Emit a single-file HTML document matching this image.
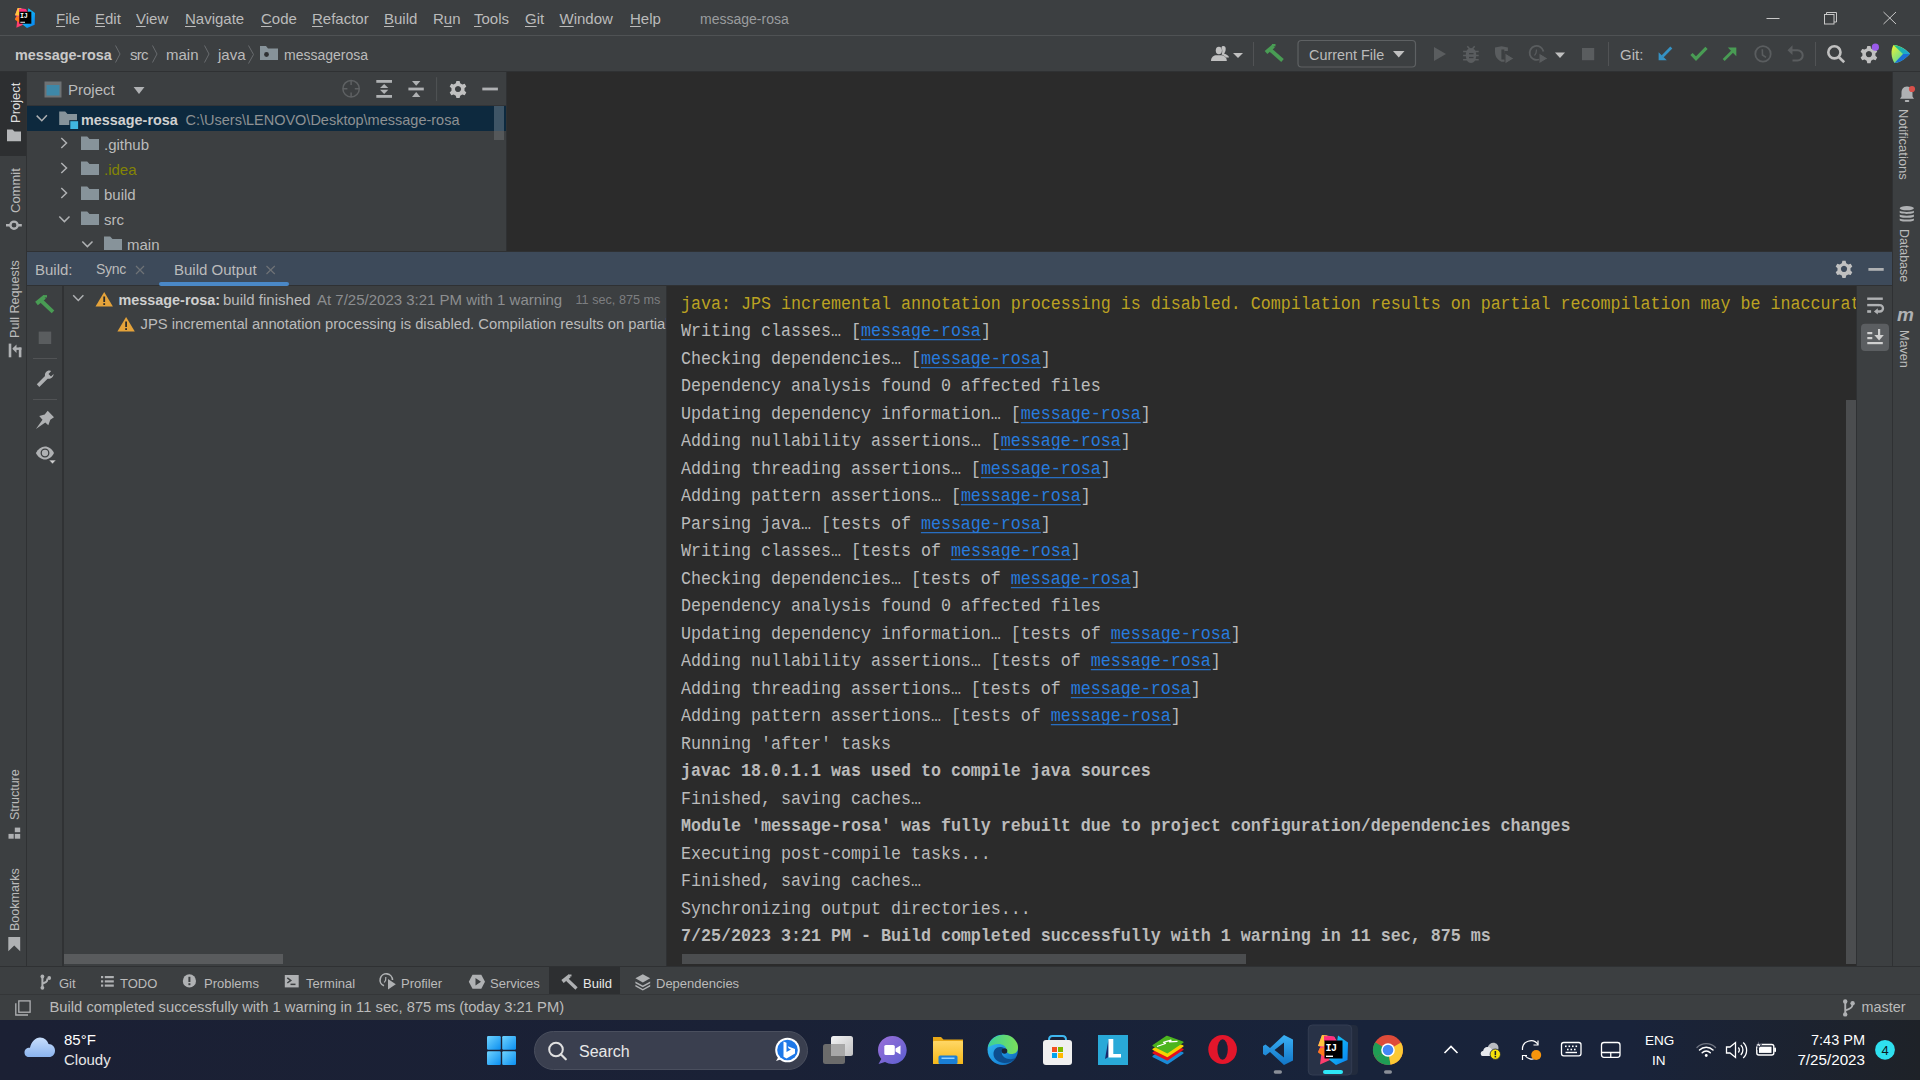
<!DOCTYPE html>
<html><head><meta charset="utf-8">
<style>
*{box-sizing:border-box;margin:0;padding:0}
html,body{width:1920px;height:1080px;overflow:hidden;background:#3c3f41;font-family:"Liberation Sans",sans-serif;color:#bbbbbb}
.a{position:absolute}
.t{position:absolute;white-space:pre;line-height:1;font-size:15px}
.s13{font-size:13px}
.m{position:absolute;white-space:pre;font-family:"Liberation Mono",monospace;font-size:16.6667px;line-height:1;color:#bbbbbb;left:681px;transform:scaleY(1.07);transform-origin:0 12.77px}
.b{font-weight:bold}
.lnk{color:#287bde;text-decoration:underline;text-underline-offset:3px}
.u{text-decoration:underline;text-underline-offset:2px}
svg{position:absolute;overflow:visible}
</style></head><body>

<!-- ===== TITLE BAR ===== -->
<div class="a" style="left:0;top:0;width:1920px;height:35px;background:#3c3f41"></div>
<div class="a" style="left:0;top:35px;width:1920px;height:1px;background:#4f5254"></div>
<div id="menus">
<div class="t" style="left:56px;top:11px"><span class="u">F</span>ile</div>
<div class="t" style="left:95px;top:11px"><span class="u">E</span>dit</div>
<div class="t" style="left:136px;top:11px"><span class="u">V</span>iew</div>
<div class="t" style="left:185px;top:11px"><span class="u">N</span>avigate</div>
<div class="t" style="left:261px;top:11px"><span class="u">C</span>ode</div>
<div class="t" style="left:312px;top:11px"><span class="u">R</span>efactor</div>
<div class="t" style="left:384px;top:11px"><span class="u">B</span>uild</div>
<div class="t" style="left:433px;top:11px">R<span class="u">u</span>n</div>
<div class="t" style="left:474px;top:11px"><span class="u">T</span>ools</div>
<div class="t" style="left:525px;top:11px"><span class="u">G</span>it</div>
<div class="t" style="left:559.5px;top:11px"><span class="u">W</span>indow</div>
<div class="t" style="left:630px;top:11px"><span class="u">H</span>elp</div>
<div class="t" style="left:700px;top:12px;font-size:14px;color:#9a9c9e">message-rosa</div>
</div>

<!-- ===== NAV BAR ===== -->
<div class="a" style="left:0;top:71px;width:1920px;height:1px;background:#2f3133"></div>
<div class="t b" style="left:15px;top:47.5px;font-size:14.4px;color:#c9c9c9">message-rosa</div>
<div class="t" style="left:130px;top:47px;letter-spacing:-0.8px">src</div>
<div class="t" style="left:166px;top:47px">main</div>
<div class="t" style="left:218px;top:47px">java</div>
<div class="t" style="left:284px;top:48px;font-size:14px">messagerosa</div>

<div class="t" style="left:1309px;top:47.5px;font-size:14.4px">Current File</div>
<div class="t" style="left:1620px;top:47px">Git:</div>
<!-- ===== LEFT STRIPE ===== -->
<div class="a" style="left:26px;top:72px;width:1px;height:894px;background:#2f3133"></div>
<div class="a" style="left:0;top:72px;width:26px;height:84px;background:#2d2f31"></div>

<!-- ===== PROJECT PANEL ===== -->
<div class="a" style="left:27px;top:105px;width:479px;height:1px;background:#323437"></div>
<div class="a" style="left:27px;top:106px;width:479px;height:25px;background:#0d293e"></div>
<div class="a" style="left:506px;top:72px;width:1px;height:179px;background:#2f3133"></div>
<div class="a" style="left:507px;top:72px;width:1385px;height:179px;background:#2b2b2b"></div>
<div class="t" style="left:68px;top:82px">Project</div>
<div class="t b" style="left:81px;top:112.5px;font-size:14.4px;color:#d0d0d0">message-rosa</div>
<div class="t" style="left:185.5px;top:112.5px;font-size:14.5px;color:#8e9193">C:\Users\LENOVO\Desktop\message-rosa</div>
<div class="t" style="left:104px;top:137px">.github</div>
<div class="t" style="left:104px;top:162px;color:#848504">.idea</div>
<div class="t" style="left:104px;top:187px">build</div>
<div class="t" style="left:104px;top:212px">src</div>
<div class="t" style="left:127px;top:237px">main</div>

<!-- ===== BUILD HEADER ===== -->
<div class="a" style="left:27px;top:251px;width:1865px;height:1px;background:#2f3133"></div>
<div class="a" style="left:27px;top:252px;width:1865px;height:33px;background:#3d4a5a"></div>
<div class="a" style="left:27px;top:285px;width:1865px;height:1px;background:#2f3133"></div>
<div class="a" style="left:159px;top:282px;width:130px;height:3.8px;border-radius:2px;background:#4a88c7"></div>
<div class="t" style="left:35px;top:262px">Build:</div>
<div class="t" style="left:96px;top:262px;font-size:14px;letter-spacing:-0.3px">Sync</div>
<div class="t" style="left:174px;top:262px">Build Output</div>

<!-- ===== BUILD TOOLBAR / TREE ===== -->
<div class="a" style="left:62px;top:286px;width:2px;height:680px;background:#303234"></div>
<div class="a" style="left:666px;top:286px;width:1px;height:680px;background:#2f3133"></div>
<div class="t b" style="left:118.5px;top:292.5px;font-size:14.4px;color:#cfcfcf">message-rosa:</div>
<div class="t" style="left:223px;top:292px">build finished</div>
<div class="t" style="left:317px;top:292px;color:#8c8e90">At 7/25/2023 3:21 PM with 1 warning</div>
<div class="t" style="left:575.5px;top:294.3px;font-size:12.67px;color:#7c7e80">11 sec, 875 ms</div>
<div class="a" style="left:63px;top:310px;width:603px;height:25px;overflow:hidden">
<div class="t" style="left:77.5px;top:7.3px;font-size:14.76px">JPS incremental annotation processing is disabled. Compilation results on partial recompilation may be inaccurate</div>
</div>
<div class="a" style="left:64px;top:954px;width:219px;height:10px;background:#595b5d"></div>

<!-- ===== CONSOLE ===== -->
<div class="a" style="left:667px;top:286px;width:1190px;height:680px;background:#2b2b2b;overflow:hidden" id="console"></div>

<div class="a" style="left:0;top:0;width:1856px;height:966px;overflow:hidden;clip-path:inset(286px 0 0 667px)">
<div class="m" style="top:296.73px;color:#bba222">java: JPS incremental annotation processing is disabled. Compilation results on partial recompilation may be inaccurate</div>
<div class="m" style="top:324.22px">Writing classes… [<span class="lnk">message-rosa</span>]</div>
<div class="m" style="top:351.71px">Checking dependencies… [<span class="lnk">message-rosa</span>]</div>
<div class="m" style="top:379.20px">Dependency analysis found 0 affected files</div>
<div class="m" style="top:406.69px">Updating dependency information… [<span class="lnk">message-rosa</span>]</div>
<div class="m" style="top:434.18px">Adding nullability assertions… [<span class="lnk">message-rosa</span>]</div>
<div class="m" style="top:461.67px">Adding threading assertions… [<span class="lnk">message-rosa</span>]</div>
<div class="m" style="top:489.16px">Adding pattern assertions… [<span class="lnk">message-rosa</span>]</div>
<div class="m" style="top:516.65px">Parsing java… [tests of <span class="lnk">message-rosa</span>]</div>
<div class="m" style="top:544.14px">Writing classes… [tests of <span class="lnk">message-rosa</span>]</div>
<div class="m" style="top:571.63px">Checking dependencies… [tests of <span class="lnk">message-rosa</span>]</div>
<div class="m" style="top:599.12px">Dependency analysis found 0 affected files</div>
<div class="m" style="top:626.61px">Updating dependency information… [tests of <span class="lnk">message-rosa</span>]</div>
<div class="m" style="top:654.10px">Adding nullability assertions… [tests of <span class="lnk">message-rosa</span>]</div>
<div class="m" style="top:681.59px">Adding threading assertions… [tests of <span class="lnk">message-rosa</span>]</div>
<div class="m" style="top:709.08px">Adding pattern assertions… [tests of <span class="lnk">message-rosa</span>]</div>
<div class="m" style="top:736.57px">Running &#39;after&#39; tasks</div>
<div class="m b" style="top:764.06px">javac 18.0.1.1 was used to compile java sources</div>
<div class="m" style="top:791.55px">Finished, saving caches…</div>
<div class="m b" style="top:819.04px">Module &#39;message-rosa&#39; was fully rebuilt due to project configuration/dependencies changes</div>
<div class="m" style="top:846.53px">Executing post-compile tasks...</div>
<div class="m" style="top:874.02px">Finished, saving caches…</div>
<div class="m" style="top:901.51px">Synchronizing output directories...</div>
<div class="m b" style="top:929.00px">7/25/2023 3:21 PM - Build completed successfully with 1 warning in 11 sec, 875 ms</div>
</div>
<!-- console toolbar -->
<div class="a" style="left:1856px;top:286px;width:1px;height:680px;background:#2f3133"></div>

<!-- right stripe -->
<div class="a" style="left:1892px;top:72px;width:1px;height:894px;background:#2f3133"></div>

<!-- bottom -->
<div class="a" style="left:0;top:966px;width:1920px;height:1px;background:#2f3133"></div>
<div class="a" style="left:549px;top:967px;width:71px;height:27px;background:#2d2f31"></div>
<div class="a" style="left:0;top:994px;width:1920px;height:1px;background:#343638"></div>
<div class="t s13" style="left:59px;top:977px">Git</div>
<div class="t s13" style="left:120px;top:977px">TODO</div>
<div class="t s13" style="left:204px;top:977px">Problems</div>
<div class="t s13" style="left:306px;top:977px">Terminal</div>
<div class="t s13" style="left:401px;top:977px">Profiler</div>
<div class="t s13" style="left:490px;top:977px">Services</div>
<div class="t s13" style="left:583px;top:977px;color:#e8e8e8">Build</div>
<div class="t s13" style="left:656px;top:977px">Dependencies</div>
<div class="t" style="left:49.5px;top:999.5px;font-size:14.75px">Build completed successfully with 1 warning in 11 sec, 875 ms (today 3:21 PM)</div>
<div class="t" style="left:1861.5px;top:999.5px;font-size:14.4px">master</div>

<!-- ===== TASKBAR ===== -->
<div class="a" style="left:0;top:1020px;width:1920px;height:60px;background:linear-gradient(90deg,#1b2034 0%,#1a2136 40%,#18233a 70%,#19233a 85%,#1e2228 100%)"></div>


<!-- ===== ICON OVERLAY ===== -->
<svg width="1920" height="1080" style="left:0;top:0" viewBox="0 0 1920 1080">
<!-- IJ logo -->
<use href="#ijicon" transform="translate(-863.7,-682.0) scale(0.6667)"/>
<!-- window controls -->
<g stroke="#c8c8c8" stroke-width="1" fill="none">
<line x1="1766.5" y1="18.5" x2="1779.5" y2="18.5"/>
<rect x="1824.5" y="14.5" width="9.5" height="9.5"/>
<path d="M1826.5,14.5 V12.5 H1836.5 V22 H1834"/>
<line x1="1883.5" y1="12" x2="1896" y2="24"/>
<line x1="1896" y1="12" x2="1883.5" y2="24"/>
</g>

<!-- breadcrumb chevrons -->
<g stroke="#686b6e" stroke-width="1" fill="none">
<path d="M115.5,45.5 L120,54 L115.5,62.5"/>
<path d="M152.5,45.5 L157,54 L152.5,62.5"/>
<path d="M204.5,45.5 L209,54 L204.5,62.5"/>
<path d="M248.5,45.5 L253.5,54.5 L248.5,63.5"/>
</g>
<!-- package folder -->
<path d="M260,46 H266 L268,48.5 H278 V60 H260 Z" fill="#87939a"/>
<circle cx="266.5" cy="54.5" r="2.4" fill="#2f3133"/>

<!-- toolbar right -->
<g fill="#c0c0c0">
<ellipse cx="1218.85" cy="50.5" rx="3.1" ry="3.8"/>
<path d="M1211,61 C1211,57 1214,55.3 1216.5,55.3 H1221 C1223.5,55.3 1226.8,57 1226.8,61 Z"/>
<path d="M1221.5,47.5 C1222,45.5 1225.5,45.5 1225.7,48.5 C1225.8,51 1225,52.5 1224,53.5 C1226.5,54.5 1229,55.5 1229,57.5 H1226 C1225,56 1223,55 1221.5,54.5 C1222.5,52.5 1222.6,50 1221.5,47.5 Z"/>
<polygon points="1233,53 1243,53 1238,58"/>
</g>
<line x1="1253.5" y1="42" x2="1253.5" y2="66" stroke="#515355" stroke-width="1"/>
<g stroke="#499c54" fill="none" stroke-linecap="butt">
<line x1="1266" y1="52.5" x2="1273.5" y2="46" stroke-width="4"/>
<line x1="1272" y1="45.2" x2="1275.5" y2="45.2" stroke-width="2.4"/>
<line x1="1270.5" y1="50" x2="1282.5" y2="60.5" stroke-width="3.8"/>
</g>
<rect x="1298" y="40.5" width="117.5" height="26.5" rx="3.5" fill="none" stroke="#5e6163" stroke-width="1.2"/>
<polygon points="1393,51 1404.5,51 1398.75,57.5" fill="#c0c0c0"/>
<g fill="#5a5d5f">
<polygon points="1434,47 1446,54 1434,61"/>
<path d="M1471,48 C1474.5,48 1476.2,51 1476.2,55 C1476.2,60 1474,63 1471,63 C1468,63 1465.8,60 1465.8,55 C1465.8,51 1467.5,48 1471,48 Z"/>
<path d="M1467.3,46.3 L1469.8,49 M1474.7,46.3 L1472.2,49 M1463.1,51.5 H1478.7 M1463.1,55.6 H1478.7 M1463.1,59.8 H1478.7" stroke="#5a5d5f" stroke-width="1.5"/>
<path d="M1495,47.5 L1501.5,46.3 L1507.9,47.5 V51 H1504.3 V59.5 H1505 V61.7 L1501.4,61.7 C1498,60 1495.3,57.5 1495,52.5 Z"/>
<polygon points="1505,53 1514,58.5 1505,64" stroke="#3c3f41" stroke-width="1"/>
<polygon points="1539,53 1548,58.4 1539,63.8" stroke="#3c3f41" stroke-width="1"/>
<polygon points="1555,52.5 1565,52.5 1560,58" fill="#c0c0c0"/>
<rect x="1582" y="48" width="12.2" height="12.2"/>
</g>
<rect x="1469" y="53" width="4.5" height="1.3" fill="#3c3f41"/><rect x="1469" y="56.9" width="4.5" height="1.3" fill="#3c3f41"/><rect x="1501.4" y="49.5" width="2.9" height="10" fill="#3c3f41"/>
<g stroke="#5a5d5f" stroke-width="1.8" fill="none">
<path d="M1539,59.5 A7,7 0 1 1 1543.5,51.5"/>
<path d="M1536.5,49.5 L1536,53 L1534.5,55.5" stroke-width="1.2"/>
</g>
<line x1="1608.5" y1="42" x2="1608.5" y2="66" stroke="#515355" stroke-width="1"/>
<!-- git icons -->
<line x1="1671.3" y1="47.6" x2="1662.5" y2="56.4" stroke="#3592c4" stroke-width="2.8"/>
<polygon points="1658.6,52.2 1658.6,60.2 1666.8,60.2" fill="#3592c4"/>
<polyline points="1691.5,54 1696,58.6 1706.5,47.8" fill="none" stroke="#499c54" stroke-width="3.2"/>
<line x1="1723.7" y1="60" x2="1732.5" y2="51.2" stroke="#499c54" stroke-width="2.8"/>
<polygon points="1727.8,47.6 1736.3,47.6 1736.3,56.2" fill="#499c54"/>
<g stroke="#5a5d5f" fill="none">
<circle cx="1763" cy="53.9" r="7.7" stroke-width="1.8"/>
<polyline points="1762.3,49.3 1762.5,55 1766,57.3" stroke-width="1.6"/>
<path d="M1791,50.2 H1797.5 A5.2,5.2 0 0 1 1797.5,60.6 H1792.5" stroke-width="2"/>
</g>
<polygon points="1787.5,50.2 1792.5,45.3 1792.5,55.1" fill="#5a5d5f"/>
<line x1="1815.5" y1="42" x2="1815.5" y2="66" stroke="#515355" stroke-width="1"/>
<g stroke="#c0c0c0" fill="none" stroke-width="2.6">
<circle cx="1834.4" cy="52.3" r="6.1"/>
<line x1="1838.5" y1="56.8" x2="1844.2" y2="62.3"/>
</g>
<!-- gear toolbar -->
<g id="gear">
<path fill="#c0c0c0" fill-rule="evenodd" d="M1867.3,46 h3.2 l0.6,2.4 l2.1,1.2 l2.4,-0.7 l1.6,2.8 l-1.8,1.7 v2.4 l1.8,1.7 l-1.6,2.8 l-2.4,-0.7 l-2.1,1.2 l-0.6,2.4 h-3.2 l-0.6,-2.4 l-2.1,-1.2 l-2.4,0.7 l-1.6,-2.8 l1.8,-1.7 v-2.4 l-1.8,-1.7 l1.6,-2.8 l2.4,0.7 l2.1,-1.2 z M1868.9,51 a3.1,3.1 0 1,0 0.01,0 z"/>
</g>
<circle cx="1875.4" cy="47.2" r="3.6" fill="#9a5bea"/>
<defs>
<linearGradient id="ai1" x1="0" y1="0" x2="1" y2="1"><stop offset="0" stop-color="#f6f22e"/><stop offset="0.55" stop-color="#7fe07f"/><stop offset="1" stop-color="#21c0e8"/></linearGradient>
<linearGradient id="ai2" x1="0" y1="0" x2="1" y2="0"><stop offset="0" stop-color="#20c878"/><stop offset="1" stop-color="#1a9ee8"/></linearGradient>
</defs>
<path d="M1893.5,45 C1896,44.5 1904,47 1910,53.8 C1904,60.5 1897,63.5 1894.5,63 C1891,58 1890.5,50 1893.5,45 Z" fill="url(#ai1)"/>
<path d="M1893.5,45 C1898,45.5 1905,48.5 1910,53.8 L1903,54 Z" fill="url(#ai2)"/>
<path d="M1903,54 L1910,53.8 C1905,59.5 1899,63 1894.5,63 Z" fill="#1b6fd6"/>
</svg>


<!-- ===== ICON OVERLAY 2 ===== -->
<svg width="1920" height="1080" style="left:0;top:0" viewBox="0 0 1920 1080">
<!-- project panel header -->
<rect x="44.5" y="81.5" width="17" height="16" fill="#6e7274" />
<rect x="46.5" y="85" width="13" height="10.5" fill="#3e88a8"/>
<polygon points="133.6,87 144.5,87 139,94" fill="#afb1b3"/>
<g stroke="#5e6163" fill="none" stroke-width="1.5">
<circle cx="351.1" cy="88.7" r="8.2"/>
<path d="M351.1,80.5 V85 M351.1,92.4 V96.9 M342.9,88.7 H347.4 M354.8,88.7 H359.3"/>
</g>
<g fill="#afb1b3">
<rect x="376.3" y="80" width="15.7" height="2.8"/>
<rect x="376.3" y="95" width="15.7" height="2.8"/>
<polygon points="380,88 388.3,88 384.15,84"/>
<polygon points="380,89.8 388.3,89.8 384.15,94"/>
<rect x="408.4" y="87.6" width="15.4" height="2.8"/>
<polygon points="412,80.9 420.4,80.9 416.2,85.7"/>
<polygon points="412,97 420.4,97 416.2,92"/>
</g>
<line x1="436.6" y1="77.2" x2="436.6" y2="101" stroke="#515355" stroke-width="1"/>
<use href="#gear" transform="translate(-1410.9,34.9)"/>
<rect x="482.3" y="87.6" width="15.6" height="2.8" fill="#afb1b3"/>
<!-- project tree scrollbar thumb -->
<rect x="494" y="106" width="10" height="34" fill="#3f5566" />
<rect x="494" y="131" width="10" height="9" fill="#55585a" />
<!-- tree chevrons -->
<g stroke="#afb1b3" stroke-width="1.5" fill="none">
<polyline points="36.7,115.6 41.8,120.7 46.9,115.3"/>
<polyline points="61.3,138 66.5,143 61.3,148"/>
<polyline points="61.3,163 66.5,168 61.3,173"/>
<polyline points="61.3,188 66.5,193 61.3,198"/>
<polyline points="59.3,216.5 64.4,221.6 69.5,216.5"/>
<polyline points="82.3,241.5 87.4,246.6 92.5,241.5"/>
</g>
<!-- module folder -->
<path d="M59.2,111.4 H65.2 L67.5,114 H77 V125 H59.2 Z" fill="#87939a"/>
<rect x="69.3" y="120.2" width="9.8" height="9.8" fill="#0d293e"/>
<rect x="70.3" y="121.2" width="7.8" height="7.8" fill="#40b6e0"/>
<!-- folders -->
<g fill="#87939a">
<path d="M81,136.4 H87.2 L89.5,139 H99 V150 H81 Z"/>
<path d="M81,161.4 H87.2 L89.5,164 H99 V175 H81 Z"/>
<path d="M81,186.4 H87.2 L89.5,189 H99 V200 H81 Z"/>
<path d="M81,211.4 H87.2 L89.5,214 H99 V225 H81 Z"/>
<path d="M104,236.4 H110.2 L112.5,239 H122 V250 H104 Z"/>
</g>
<!-- build header right -->
<use href="#gear" transform="translate(-24.9,214.8)"/>
<rect x="1868.4" y="268" width="15.3" height="2.8" fill="#afb1b3"/>
<g stroke="#6e7276" stroke-width="1.2">
<path d="M136,266 L144,274 M144,266 L136,274"/>
<path d="M266.5,266 L274.8,274 M274.8,266 L266.5,274"/>
</g>
<!-- build toolbar -->
<g stroke="#499c54" fill="none">
<line x1="36.5" y1="303.5" x2="44.5" y2="297" stroke-width="4.2"/>
<line x1="43" y1="296.3" x2="47" y2="296.3" stroke-width="2.4"/>
<line x1="41.5" y1="301" x2="53" y2="311.8" stroke-width="3.8"/>
</g>
<rect x="38.7" y="331.6" width="12.5" height="12.4" fill="#5a5d5f"/>
<line x1="33" y1="358.5" x2="57" y2="358.5" stroke="#515355"/>
<line x1="33" y1="399.5" x2="57" y2="399.5" stroke="#515355"/>
<path fill="#afb1b3" d="M49.5,370.5 C46.5,370.5 44.5,373 45,376 L36.8,384.3 L39.3,387 L47.6,378.7 C50.6,379.3 53.5,377.3 53.6,374 L51,376.5 L48.5,374 L51.2,371 C50.8,370.7 50.2,370.5 49.5,370.5 Z"/>
<polygon fill="#afb1b3" points="47.7,410.7 54,417.3 50.3,419.8 48.3,425.2 45.3,422.4 35.9,429.1 42.5,419.7 39.2,416.1 44.7,414.5"/>
<g>
<path fill="#afb1b3" d="M35.9,453 C38,448.8 41.5,446.6 45,446.6 C48.5,446.6 52,448.8 54,453 C52,457.3 48.5,459.5 45,459.5 C41.5,459.5 38,457.3 35.9,453 Z"/>
<circle cx="45" cy="453" r="3.8" fill="none" stroke="#3c3f41" stroke-width="1.3"/>
<polygon points="48.9,460.1 56.1,460.1 52.5,464" fill="#d0d0d0" stroke="#3c3f41" stroke-width="0.6"/>
</g>
<!-- build tree -->
<polyline points="73.2,295.3 78.3,300.5 83.4,295.3" stroke="#afb1b3" stroke-width="1.5" fill="none"/>
<polygon points="104.2,292 112.9,306.6 95.5,306.6" fill="#e5a33a"/>
<rect x="103.3" y="296.5" width="1.8" height="5.5" fill="#2b2b2b"/>
<rect x="103.3" y="303.2" width="1.8" height="1.8" fill="#2b2b2b"/>
<polygon points="126.1,317 134.8,331.5 117.4,331.5" fill="#e5a33a"/>
<rect x="125.2" y="321.5" width="1.8" height="5.5" fill="#2b2b2b"/>
<rect x="125.2" y="328.2" width="1.8" height="1.8" fill="#2b2b2b"/>
<!-- console toolbar -->
<g fill="#afb1b3">
<rect x="1867.2" y="297.5" width="15.6" height="2.4"/>
<rect x="1867.2" y="303.9" width="12" height="2.4"/>
<rect x="1867.2" y="310.2" width="3.9" height="2.6"/>
<path d="M1878.5,305.1 H1879.8 A3.2,3.2 0 0 1 1879.8,311.5 H1876.5" fill="none" stroke="#afb1b3" stroke-width="2.3"/>
<polygon points="1873.9,311.4 1877.8,308.2 1877.8,314.6"/>
</g>
<rect x="1861" y="323.7" width="28" height="27.3" rx="4" fill="#5b5e61"/>
<g fill="#d0d0d0">
<rect x="1867.3" y="332" width="5" height="2.2"/>
<rect x="1867.3" y="337" width="5" height="2.2"/>
<rect x="1867.3" y="342" width="15.5" height="2.2"/>
<rect x="1878" y="329" width="2.2" height="8"/>
<polygon points="1874.3,335 1883.8,335 1879.1,340.5"/>
</g>
<!-- scrollbars -->
<rect x="1846" y="400" width="10" height="564" fill="#4b4d4f"/>
<rect x="682" y="954" width="564" height="10" fill="#4b4d4f"/>
</svg>


<!-- ===== STRIPE TEXTS ===== -->
<div class="t s13" style="left:9.4px;top:123px;transform-origin:0 0;transform:rotate(-90deg);color:#dedede">Project</div>
<div class="t s13" style="left:9.4px;top:212.5px;transform-origin:0 0;transform:rotate(-90deg)">Commit</div>
<div class="t" style="left:9.4px;top:337.5px;transform-origin:0 0;transform:rotate(-90deg);font-size:12.6px">Pull Requests</div>
<div class="t" style="left:9.4px;top:819.5px;transform-origin:0 0;transform:rotate(-90deg);font-size:12.5px">Structure</div>
<div class="t" style="left:9.4px;top:930.8px;transform-origin:0 0;transform:rotate(-90deg);font-size:12.56px">Bookmarks</div>
<div class="t s13" style="left:1910.2px;top:108.5px;transform-origin:0 0;transform:rotate(90deg)">Notifications</div>
<div class="t" style="left:1910.2px;top:228.8px;transform-origin:0 0;transform:rotate(90deg);font-size:12.4px">Database</div>
<div class="t" style="left:1910.2px;top:329.6px;transform-origin:0 0;transform:rotate(90deg);font-size:12.6px">Maven</div>
<svg width="1920" height="1080" style="left:0;top:0" viewBox="0 0 1920 1080">
<!-- left stripe icons -->
<path d="M7,129.5 H12.5 L14.5,131.5 H21 V141.2 H7 Z" fill="#b5b7b9"/>
<g fill="none" stroke="#afb1b3">
<circle cx="14" cy="225.2" r="3.6" stroke-width="2.4"/>
<path d="M6,225.2 H10.4 M17.6,225.2 H21.8" stroke-width="2.4"/>
</g>
<g fill="#afb1b3">
<rect x="8.7" y="343.6" width="2.6" height="13.7"/>
<rect x="18.8" y="347.5" width="2.6" height="9.8"/>
<rect x="13.5" y="347.5" width="7.9" height="2.4"/>
<polygon points="12.3,348.7 16.5,344.5 16.5,352.9"/>
<rect x="14.8" y="827.6" width="5.4" height="4.6"/>
<rect x="8.5" y="833.9" width="5.2" height="4.8"/>
<rect x="14.8" y="833.9" width="5.4" height="4.8"/>
<polygon points="8.3,936.9 20.2,936.9 20.2,951.2 14.25,945.6 8.3,951.2"/>
</g>
<!-- right stripe icons -->
<g fill="#afb1b3">
<path d="M1907,86.5 C1903,86.5 1901.5,89.5 1901.5,93 V96.5 L1900,98.8 H1914 L1912.5,96.5 V93 C1912.5,89.5 1911,86.5 1907,86.5 Z"/>
<rect x="1904.8" y="100" width="4.5" height="1.9" rx="0.9"/>
<ellipse cx="1906.8" cy="208.2" rx="7.1" ry="2.1"/>
<path d="M1899.7,210.8 C1901,212.3 1912.6,212.3 1913.9,210.8 V212.6 C1913.9,214.4 1899.7,214.4 1899.7,212.6 Z"/>
<path d="M1899.7,214.6 C1901,216.1 1912.6,216.1 1913.9,214.6 V216.4 C1913.9,218.2 1899.7,218.2 1899.7,216.4 Z"/>
<path d="M1899.7,218.4 C1901,219.9 1912.6,219.9 1913.9,218.4 V220.2 C1913.9,222 1899.7,222 1899.7,220.2 Z"/>
</g>
<circle cx="1912" cy="89" r="3.1" fill="#d9504a"/>
<text x="1897" y="321" font-family="Liberation Sans" font-weight="bold" font-style="italic" font-size="19" fill="#afb1b3">m</text>
</svg>


<!-- ===== BOTTOM ICONS ===== -->
<svg width="1920" height="1080" style="left:0;top:0" viewBox="0 0 1920 1080">
<g fill="#afb1b3">
<!-- git branch -->
<rect x="41.4" y="976" width="2" height="12"/>
<circle cx="42.4" cy="976.5" r="1.9"/>
<circle cx="42.4" cy="987.8" r="1.9"/>
<circle cx="49.2" cy="978" r="1.9"/>
<path d="M48.2,978.5 V980 C48.2,982 46,983.5 42.4,984.5 V982.5 C45,981.5 46.3,981 46.3,979.5 V978.5 Z"/>
<!-- todo -->
<rect x="101" y="976" width="2.2" height="2.2"/><rect x="104.8" y="976" width="9" height="2.2"/>
<rect x="101" y="980.3" width="2.2" height="2.2"/><rect x="104.8" y="980.3" width="9" height="2.2"/>
<rect x="101" y="984.5" width="2.2" height="2.2"/><rect x="104.8" y="984.5" width="9" height="2.2"/>
<!-- problems -->
<circle cx="189.4" cy="980.9" r="6.6"/>
<!-- terminal -->
<rect x="284.8" y="975" width="13.9" height="12.4"/>
<!-- services hexagon -->
<polygon points="472.5,974.7 481.3,974.7 485,981.75 481.3,988.8 472.5,988.8 468.8,981.75"/>
<!-- layers -->
<polygon points="642.8,974.2 650.2,978.3 642.8,982.4 635.4,978.3"/>
<path d="M635.4,981.5 L642.8,985.6 L650.2,981.5 V983.2 L642.8,987.3 L635.4,983.2 Z"/>
<path d="M635.4,984.8 L642.8,988.9 L650.2,984.8 V986.5 L642.8,990.6 L635.4,986.5 Z"/>
</g>
<g fill="#3c3f41">
<rect x="188.4" y="976.8" width="2" height="5.2"/>
<rect x="188.4" y="983.2" width="2" height="2"/>

<polygon points="475.5,978 475.5,985.5 481,981.75"/>
</g>
<g stroke="#afb1b3" fill="none">

<path d="M384,985.8 A6.2,6.2 0 1 1 392.5,980" stroke-width="1.6"/>
<path d="M385.8,977 L385.6,980.4 L384.2,982.5" stroke-width="1.2"/>
</g>
<path d="M287.3,977.8 L290.8,980.4 L287.3,983" stroke="#3c3f41" stroke-width="1.5" fill="none"/>
<rect x="290.5" y="983.6" width="5" height="1.5" fill="#3c3f41"/>
<polygon points="388,979 395.8,984.25 388,989.5" fill="#afb1b3"/>
<!-- hammer grey -->
<g stroke="#afb1b3" fill="none">
<line x1="562.5" y1="981.5" x2="569.5" y2="975.8" stroke-width="3.6"/>
<line x1="568" y1="975.5" x2="571.5" y2="975.5" stroke-width="2"/>
<line x1="567" y1="979.5" x2="576.5" y2="988.5" stroke-width="3.2"/>
</g>
<!-- status bar icon -->
<g fill="none" stroke="#afb1b3" stroke-width="1.3">
<rect x="18.8" y="1000.9" width="11.3" height="11.3"/>
<path d="M15.8,1003.2 V1015 H28"/>
</g>
<!-- master -->
<g fill="#afb1b3">
<rect x="1844.3" y="1001.5" width="1.9" height="13"/>
<circle cx="1845.2" cy="1001.5" r="2.2"/>
<circle cx="1845.2" cy="1014.4" r="2.2"/>
<circle cx="1852.6" cy="1003.2" r="2.2"/>
</g>
<path d="M1852.3,1004 V1005.5 C1852.3,1008 1849,1009.2 1845.5,1010.3" stroke="#afb1b3" stroke-width="1.8" fill="none"/>
</svg>


<!-- ===== TASKBAR CONTENT ===== -->
<div class="t" style="left:64px;top:1032px;font-size:15px;color:#ffffff">85°F</div>
<div class="t" style="left:64px;top:1052px;font-size:15px;color:#e6e6e6">Cloudy</div>
<div class="a" style="left:533.5px;top:1030.5px;width:274px;height:39px;border-radius:20px;background:#3a3f4f;border:1px solid #4a4f5e"></div>
<div class="t" style="left:579px;top:1043.5px;font-size:16px;color:#e8e8e8">Search</div>
<div class="t" style="left:1645px;top:1034px;font-size:13.5px;color:#ffffff">ENG</div>
<div class="t" style="left:1652px;top:1054px;font-size:13.5px;color:#ffffff">IN</div>
<div class="t" style="left:1765px;top:1032.5px;font-size:14.5px;color:#ffffff;width:100px;text-align:right">7:43 PM</div>
<div class="t" style="left:1765px;top:1052.3px;font-size:15.2px;color:#ffffff;width:100px;text-align:right">7/25/2023</div>
<svg width="1920" height="1080" style="left:0;top:0" viewBox="0 0 1920 1080">
<defs>
<linearGradient id="cloudg" x1="0" y1="0" x2="0" y2="1"><stop offset="0" stop-color="#c8defc"/><stop offset="1" stop-color="#8bb4ef"/></linearGradient>
<linearGradient id="wing" x1="0" y1="0" x2="1" y2="1"><stop offset="0" stop-color="#6fd3ff"/><stop offset="1" stop-color="#0a8ef0"/></linearGradient>
<linearGradient id="tv" x1="0" y1="0" x2="1" y2="1"><stop offset="0" stop-color="#ffffff"/><stop offset="1" stop-color="#c9c9c9"/></linearGradient>
<linearGradient id="teams" x1="0" y1="0" x2="1" y2="1"><stop offset="0" stop-color="#9b6fd9"/><stop offset="1" stop-color="#5b5fd0"/></linearGradient>
<linearGradient id="fold" x1="0" y1="0" x2="0" y2="1"><stop offset="0" stop-color="#ffd766"/><stop offset="1" stop-color="#f5b819"/></linearGradient>
<linearGradient id="edge1" x1="0" y1="0" x2="1" y2="1"><stop offset="0" stop-color="#37c0f0"/><stop offset="0.6" stop-color="#1b8fe0"/><stop offset="1" stop-color="#0c59a4"/></linearGradient>
<linearGradient id="edge2" x1="0" y1="0" x2="1" y2="0"><stop offset="0" stop-color="#3bcf9a"/><stop offset="1" stop-color="#7be05a"/></linearGradient>
<linearGradient id="chromered" x1="0" y1="0" x2="1" y2="0"><stop offset="0" stop-color="#db4437"/><stop offset="1" stop-color="#e0533f"/></linearGradient>
<linearGradient id="vsc" x1="0" y1="0" x2="0" y2="1"><stop offset="0" stop-color="#3ab0f5"/><stop offset="1" stop-color="#1175c7"/></linearGradient>
</defs>
<!-- weather cloud -->
<path d="M29,1057 C25.5,1057 24.5,1054.5 24.5,1052.5 C24.5,1049.5 27,1047.5 30,1047.8 C31,1042 35.5,1037.5 40,1037.5 C44.5,1037.5 47.5,1040.5 48.5,1044 C52.5,1044 55,1047 55,1050.5 C55,1054.5 52.5,1057 49,1057 Z" fill="url(#cloudg)"/>
<!-- windows logo -->
<rect x="487" y="1036" width="13.8" height="13.8" rx="1.2" fill="url(#wing)"/>
<rect x="502.2" y="1036" width="13.8" height="13.8" rx="1.2" fill="url(#wing)"/>
<rect x="487" y="1051.2" width="13.8" height="13.8" rx="1.2" fill="url(#wing)"/>
<rect x="502.2" y="1051.2" width="13.8" height="13.8" rx="1.2" fill="url(#wing)"/>
<!-- search magnifier -->
<circle cx="556" cy="1049.5" r="6.8" fill="none" stroke="#e0e0e0" stroke-width="2"/>
<line x1="560.8" y1="1054.3" x2="565.8" y2="1059.3" stroke="#e0e0e0" stroke-width="2.2" stroke-linecap="round"/>
<!-- bing -->
<circle cx="787.5" cy="1050" r="12.3" fill="#ffffff"/>
<path d="M776,1061 L779,1056 L782,1059 Z" fill="#ffffff"/>
<circle cx="787.5" cy="1050" r="10.3" fill="#1e78e8"/>
<path d="M783.5,1041.5 L786.5,1042.7 V1052 L791,1049.5 L788.5,1048.3 L787.8,1046.2 L795,1049 V1053.5 L786.5,1058.5 L783.5,1056.8 Z" fill="#ffffff"/>
<!-- task view -->
<rect x="823" y="1044" width="22" height="20" rx="2.5" fill="#6b6b6b"/>
<rect x="831" y="1036" width="22" height="20" rx="2.5" fill="url(#tv)" opacity="0.95"/>
<rect x="831" y="1044" width="14" height="12" fill="#a8a8a8"/>
<!-- teams chat -->
<path d="M892.5,1036 C884.5,1036 878,1042.3 878,1050 C878,1053.5 879.3,1056.6 881.3,1059 L878.5,1064 L885,1062 C887.3,1063.3 889.8,1064 892.5,1064 C900.5,1064 906.7,1057.7 906.7,1050 C906.7,1042.3 900.5,1036 892.5,1036 Z" fill="url(#teams)"/>
<rect x="884.3" y="1045" width="10.5" height="10" rx="1.6" fill="#ffffff"/>
<polygon points="895.5,1048.5 900.5,1045.5 900.5,1054.5 895.5,1051.5" fill="#ffffff"/>
<!-- explorer -->
<path d="M933,1037 H941 L943.5,1039.5 H963 V1064 H933 Z" fill="#e8a817"/>
<rect x="933" y="1041" width="30" height="23" rx="1" fill="url(#fold)"/>
<rect x="938.5" y="1055.5" width="19" height="8.5" rx="1.5" fill="#1a7fd6"/>
<rect x="941.5" y="1057.5" width="13" height="1.5" fill="#8fd0ff"/>
<!-- edge -->
<circle cx="1002.75" cy="1049.85" r="15.2" fill="url(#edge1)"/>
<path d="M988,1047 C990,1038 998,1034.7 1004,1034.7 C1012,1034.7 1018,1041 1018,1047.5 C1018,1052 1015,1054 1011.5,1054 C1008,1054 1006.5,1052 1006.5,1050.5 C1006.5,1046 1002,1043.5 997.5,1044 C993,1044.5 989.5,1046.5 988,1047 Z" fill="url(#edge2)"/>
<path d="M1000,1047 C996,1047 993.5,1050 993.5,1054 C993.5,1059.5 999,1063 1004.5,1063 C1009,1063 1013.5,1061 1016,1058 C1012,1060 1006,1059.5 1003,1056 C1001,1053.5 1001.5,1049.5 1004,1048 C1003,1047.3 1001.5,1047 1000,1047 Z" fill="#0d4e8f"/>
<circle cx="1004.5" cy="1051" r="2.8" fill="#1a2237"/>
<!-- store -->
<path d="M1049,1040 C1049,1037 1050,1036 1052.5,1036 H1062.5 C1065,1036 1066,1037 1066,1040" fill="none" stroke="#3fb8f0" stroke-width="2"/>
<rect x="1043" y="1040" width="29" height="25" rx="3" fill="#f0f0f0"/>
<rect x="1052" y="1047" width="5" height="5" fill="#f25022"/>
<rect x="1058" y="1047" width="5" height="5" fill="#7fba00"/>
<rect x="1052" y="1053" width="5" height="5" fill="#00a4ef"/>
<rect x="1058" y="1053" width="5" height="5" fill="#ffb900"/>
<!-- L app -->
<rect x="1098" y="1035" width="30" height="30" fill="#29a9d8"/>
<polygon points="1105,1059 1108.5,1039.5 1108.5,1057" fill="#1a2a6c"/>
<polygon points="1108.5,1039 1113.3,1039 1113.3,1054 1121,1054 1121,1057.5 1108.5,1057.5" fill="#ffffff"/>
<!-- bluestacks -->
<polygon points="1153.2,1056.5 1166.9,1047.4 1182.8,1053.1 1167.3,1063.5" fill="#1a8ad6" stroke="#1a8ad6" stroke-width="1.6" stroke-linejoin="round"/>
<polygon points="1153.2,1052.8 1166.9,1043.7 1182.8,1049.4 1167.3,1059.8" fill="#e5101c" stroke="#e5101c" stroke-width="1.6" stroke-linejoin="round"/>
<polygon points="1153.2,1049.4 1166.9,1040.3 1182.8,1046.0 1167.3,1056.4" fill="#f6d200" stroke="#f6d200" stroke-width="1.6" stroke-linejoin="round"/>
<polygon points="1153.2,1045.6 1166.9,1036.5 1182.8,1042.2 1167.3,1052.6" fill="#4cb51f" stroke="#4cb51f" stroke-width="1.6" stroke-linejoin="round"/>
<path d="M1157,1046.5 L1165.5,1043.5 L1163.5,1042.3 L1171,1040.2 L1169.5,1041.8 L1177.5,1041.3" stroke="#ffffff" stroke-width="1.3" fill="none" stroke-linejoin="round"/>
<!-- opera -->
<ellipse cx="1222.6" cy="1049.5" rx="14.3" ry="14.5" fill="#e3162b"/>
<ellipse cx="1222.6" cy="1049.5" rx="5.2" ry="10.3" fill="#1a2339"/>
<!-- vscode -->
<path d="M1284,1035 L1293,1039.5 V1060.5 L1284,1065 L1270,1052 L1265.5,1055.5 L1263,1054 V1046 L1265.5,1044.5 L1270,1048 Z M1284,1042.5 L1274.5,1050 L1284,1057.5 Z" fill="url(#vsc)"/>
<rect x="1273.7" y="1070.3" width="8.3" height="3.4" rx="1.7" fill="#8a8f98"/>
<!-- IJ highlight -->
<rect x="1311" y="1025" width="47" height="50" rx="4" fill="#222b3d"/>
<rect x="1308.3" y="1025" width="43.4" height="50" rx="4" fill="#283247" stroke="#333d52" stroke-width="1"/>
<defs><linearGradient id="ijl" x1="0" y1="0" x2="0" y2="1"><stop offset="0" stop-color="#ff3c8a"/><stop offset="1" stop-color="#ff3d6a"/></linearGradient>
<linearGradient id="ijr" x1="0" y1="0" x2="1" y2="1"><stop offset="0" stop-color="#16d6f8"/><stop offset="1" stop-color="#0a7ff0"/></linearGradient></defs>
<g id="ijicon"><polygon points="1322,1035 1334,1036.5 1337,1041 1330,1060 1320,1064.5 1321.5,1053 1318,1052 1320.5,1046.5 1318,1046" fill="url(#ijl)"/>
<polygon points="1322,1035 1327.5,1035.5 1324,1046.5 1318,1046" fill="#ffc53d"/>
<polygon points="1319.5,1048.5 1324.5,1047 1324.5,1057 1318,1052.5" fill="#ff7a1c"/>
<polygon points="1324,1036 1335,1037 1333,1041 1324,1041" fill="#ff2f7c"/>
<polygon points="1338,1035.5 1348,1042.5 1347.5,1060 1336,1065 1329,1059.5 1336,1049" fill="url(#ijr)"/>
<rect x="1324.5" y="1040.5" width="18" height="18" fill="#000000"/>
<text x="1325.6" y="1050.6" font-family="Liberation Mono" font-weight="bold" font-size="10" fill="#ffffff" letter-spacing="-0.6">IJ</text>
<rect x="1326" y="1055.6" width="7" height="1.4" fill="#ffffff"/></g>
<rect x="1323" y="1070" width="20" height="4" rx="2" fill="#2ee6f6"/>
<!-- chrome -->
<circle cx="1388" cy="1050" r="15" fill="#de4b39"/>
<path d="M1388,1050 L1375,1057.5 A15,15 0 0 0 1390.5,1064.8 Z" fill="#1f9d55"/>
<path d="M1388,1050 L1375,1057.5 A15,15 0 0 1 1375.2,1042.3 Z" fill="#1f9d55"/>
<path d="M1388,1050 L1401,1042.5 A15,15 0 0 1 1390.5,1064.8 Z" fill="#fcc934"/>
<circle cx="1388" cy="1050" r="6.8" fill="#ffffff"/>
<circle cx="1388" cy="1050" r="5.3" fill="#4487f5"/>
<rect x="1384" y="1070.3" width="8" height="3.4" rx="1.7" fill="#8a8f98"/>
<!-- tray -->
<polyline points="1444.5,1053 1451,1046.5 1457.5,1053" fill="none" stroke="#ffffff" stroke-width="1.6"/>
<path d="M1483,1056 C1481.5,1056 1480.8,1054.8 1480.8,1053.5 C1480.8,1052 1482,1051 1483.3,1051 C1483.7,1048.5 1485.5,1047 1487.8,1047 C1488.8,1044.5 1490.8,1042.8 1493.3,1042.8 C1496.3,1042.8 1498.5,1045 1498.5,1048 L1497,1056 Z" fill="#b9bcc2"/>
<path d="M1483,1056 C1481.5,1056 1480.8,1054.8 1480.8,1053.5 C1480.8,1052 1482,1051 1483.3,1051 C1483.7,1048.5 1485.5,1047 1487.8,1047 C1490,1047 1491.5,1048.5 1492,1050 L1490,1056 Z" fill="#e6e8ec"/>
<circle cx="1495.3" cy="1054.2" r="5.2" fill="#f5e10c" stroke="#1a2136" stroke-width="0.8"/>
<rect x="1494.6" y="1051" width="1.5" height="4.2" fill="#222"/>
<rect x="1494.6" y="1056" width="1.5" height="1.4" fill="#222"/>
<g fill="none" stroke="#ffffff" stroke-width="1.2">
<path d="M1522.5,1050 A8.5,8.5 0 0 1 1538,1044.5"/>
<path d="M1538,1040.5 V1045 H1533.5"/>
<path d="M1536,1058 A8.5,8.5 0 0 1 1525,1055.5"/>
<path d="M1522.5,1060 V1055.5 H1527"/>
</g>
<circle cx="1536.2" cy="1055" r="5" fill="#f7950c"/>
<g fill="none" stroke="#ffffff" stroke-width="1.3">
<rect x="1561.5" y="1042.5" width="19.5" height="13.3" rx="2.2"/>
<rect x="1601.5" y="1042.5" width="18.5" height="14.8" rx="2.5"/>
<path d="M1601.5,1052.5 H1620 M1610.75,1052.5 V1057.3"/>
</g>
<g fill="#ffffff">
<rect x="1565" y="1045.5" width="1.6" height="1.6"/><rect x="1568.5" y="1045.5" width="1.6" height="1.6"/><rect x="1572" y="1045.5" width="1.6" height="1.6"/><rect x="1575.5" y="1045.5" width="1.6" height="1.6"/>
<rect x="1567" y="1048.7" width="1.6" height="1.6"/><rect x="1570.5" y="1048.7" width="1.6" height="1.6"/><rect x="1574" y="1048.7" width="1.6" height="1.6"/>
<rect x="1565.5" y="1051.8" width="11.5" height="1.4"/>
</g>
<!-- wifi -->
<g fill="none" stroke-linecap="round">
<path d="M1697,1047.5 A13,13 0 0 1 1715.5,1047.5" stroke="#6f7480" stroke-width="1.4"/>
<path d="M1699.5,1050 A9.5,9.5 0 0 1 1713,1050" stroke="#ffffff" stroke-width="1.5"/>
<path d="M1702.2,1052.7 A5.6,5.6 0 0 1 1710.3,1052.7" stroke="#ffffff" stroke-width="1.5"/>
</g>
<circle cx="1706.25" cy="1055.5" r="1.4" fill="#ffffff"/>
<!-- volume -->
<path d="M1726.5,1047 H1730 L1735.5,1042.5 V1057.5 L1730,1053 H1726.5 Z" fill="none" stroke="#ffffff" stroke-width="1.3"/>
<g fill="none" stroke="#ffffff" stroke-width="1.3">
<path d="M1738.3,1047.5 A3.5,3.5 0 0 1 1738.3,1052.5"/>
<path d="M1740.8,1045 A7,7 0 0 1 1740.8,1055"/>
<path d="M1743.2,1042.5 A10.5,10.5 0 0 1 1743.2,1058"/>
</g>
<!-- battery -->
<rect x="1756.8" y="1044.5" width="17" height="10.5" rx="2" fill="none" stroke="#ffffff" stroke-width="1.4"/>
<rect x="1774.2" y="1047.5" width="1.8" height="4.5" rx="0.8" fill="#ffffff"/>
<rect x="1759" y="1046.7" width="12.5" height="6.2" fill="#ffffff"/>
<path d="M1759,1041 L1756,1046 H1759 L1757.5,1049.5 L1761.5,1044 H1758.8 Z" fill="#ffffff" stroke="#1a2237" stroke-width="0.8"/>
<!-- badge -->
<circle cx="1885" cy="1049.8" r="9.9" fill="#2fe0ef"/>
<text x="1885" y="1054.5" text-anchor="middle" font-family="Liberation Sans" font-size="13" fill="#0c1a22">4</text>
</svg>

</body></html>
